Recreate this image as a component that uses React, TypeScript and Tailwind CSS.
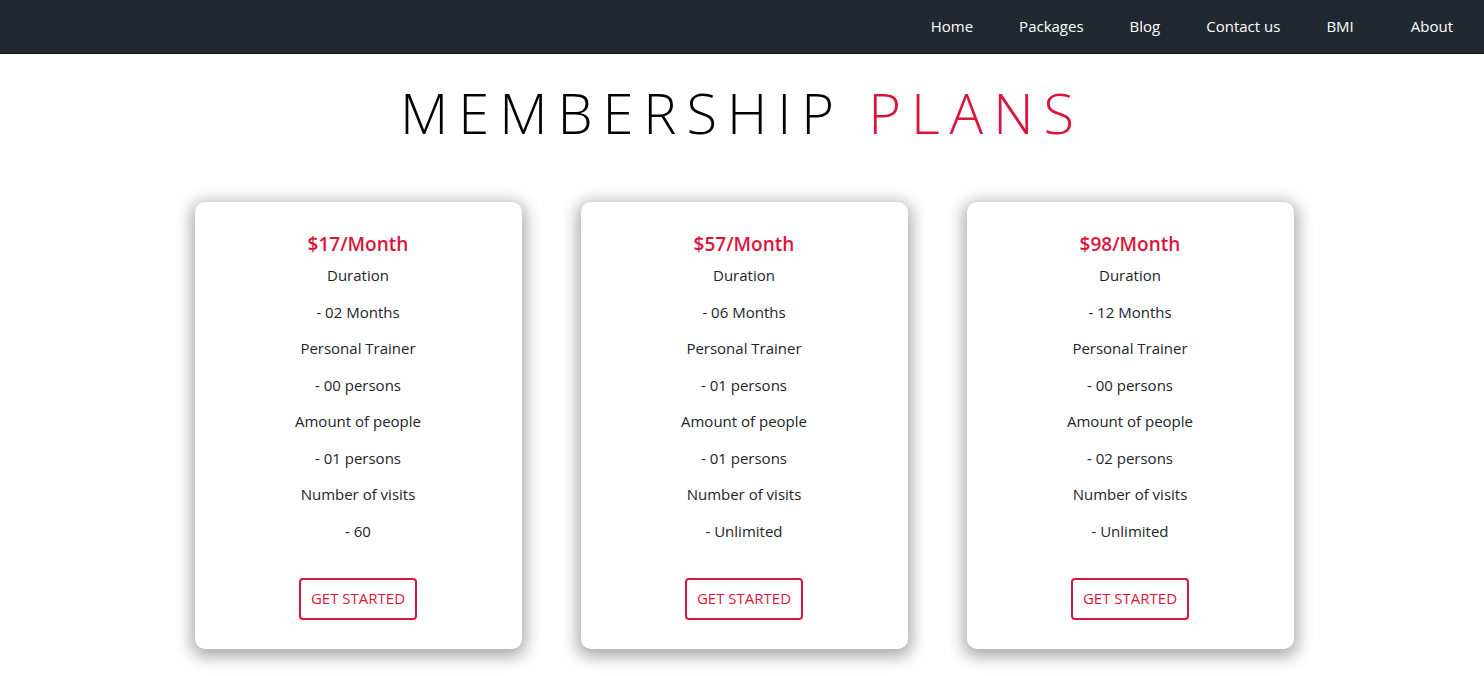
const plans = [
  {
    price: "$17/Month",
    duration: "- 02 Months",
    trainer: "- 00 persons",
    people: "- 01 persons",
    visits: "- 60",
  },
  {
    price: "$57/Month",
    duration: "- 06 Months",
    trainer: "- 01 persons",
    people: "- 01 persons",
    visits: "- Unlimited",
  },
  {
    price: "$98/Month",
    duration: "- 12 Months",
    trainer: "- 00 persons",
    people: "- 02 persons",
    visits: "- Unlimited",
  },
];

const links = ["Home", "Packages", "Blog", "Contact us", "BMI", "About"];

function PlanCard({ plan }: { plan: (typeof plans)[number] }) {
  const rows = [
    "Duration",
    plan.duration,
    "Personal Trainer",
    plan.trainer,
    "Amount of people",
    plan.people,
    "Number of visits",
    plan.visits,
  ];
  return (
    <div className="w-[327px] h-[447px] bg-white rounded-[10px] shadow-[0_4px_16px_4px_rgba(0,0,0,0.33)] flex flex-col items-center pt-[29px]">
      <h3 className="text-[19px] font-semibold text-[#dc143c] leading-[26px]">{plan.price}</h3>
      <div className="flex flex-col items-center text-[15px] text-[#212529] leading-[20px] gap-[16.5px] mt-[8px]">
        {rows.map((r, i) => (
          <p key={i}>{r}</p>
        ))}
      </div>
      <button className="mt-[37px] h-[42px] px-[10px] border-2 border-[#dc143c] rounded-[4px] text-[#dc143c] text-[15px] uppercase bg-white">
        Get started
      </button>
    </div>
  );
}

export default function App() {
  return (
    <div className="min-h-[676px] bg-white font-['Open_Sans',sans-serif]">
      <nav className="h-[54px] bg-[#222831] flex items-center justify-end pr-[31px] border-b border-[#111]">
        <ul className="flex items-center text-white text-[15px]">
          {links.map((l, i) => (
            <li
              key={l}
              className={i === links.length - 1 ? "ml-[57px]" : i === 0 ? "" : "ml-[46px]"}
            >
              {l}
            </li>
          ))}
        </ul>
      </nav>

      <h1 className="text-center font-light text-[56px] tracking-[0.177em] leading-[64px] mt-[26px] text-black">
        MEMBERSHIP <span className="text-[#dc143c]">PLANS</span>
      </h1>

      <div className="flex justify-center gap-[59px] mt-[58px] pl-[4px] pb-[22px]">
        {plans.map((p) => (
          <PlanCard key={p.price} plan={p} />
        ))}
      </div>
    </div>
  );
}
